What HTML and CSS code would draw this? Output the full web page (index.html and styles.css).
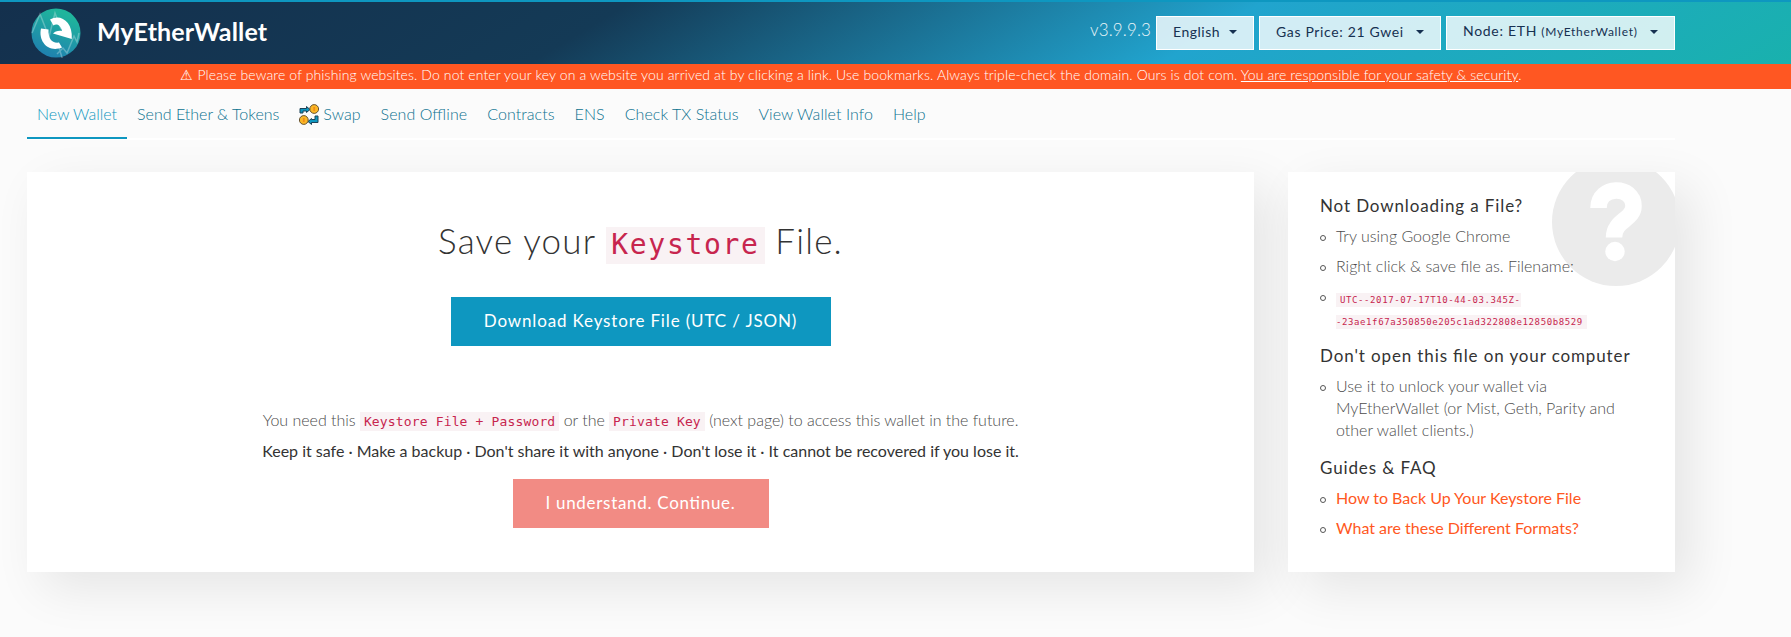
FILE: index.html
```html
<!DOCTYPE html>
<html lang="en">
<head>
<meta charset="utf-8">
<title>MyEtherWallet</title>
<link rel="stylesheet" href="styles.css">
</head>
<body>
<header class="header">
  <a class="brand">
    <svg class="brand-logo" viewBox="0 0 50 50" width="50" height="50">
      <defs>
        <linearGradient id="lg" x1="0.7" y1="0" x2="0.3" y2="1">
          <stop offset="0.1" stop-color="#1fb59c"/>
          <stop offset="1" stop-color="#1f7fb0"/>
        </linearGradient>
      </defs>
      <circle cx="25" cy="25" r="24.5" fill="url(#lg)"/>
      <path d="M1 25 9 6l9 23 6-24 6 16M26 46l6-6 4 5 7-17 3 6 2-9M27 36l5 17" fill="none" stroke="#fff" stroke-opacity=".28" stroke-width="1.5"/>
      <path d="M19 11.500C29 5.500 42 13 40.800 31L22 25.500C23.500 23.500 28 22 31 23C29.500 16.500 25 15.500 22.500 17.500Z" fill="#fff"/>
      <path d="M10 20.500C7 34 18 45 31 39.500L28 34.500C21 35.500 17 30.500 17.500 21.500Z" fill="#fff"/>
    </svg>
    <span class="brand-name">MyEtherWallet</span>
  </a>
  <div class="tools">
    <span class="version">v3.9.9.3</span>
    <a class="select select-lang">English<i class="caret"></i></a>
    <a class="select select-gas">Gas Price: 21 Gwei<i class="caret"></i></a>
    <a class="select select-node"><span>Node: ETH <small>(MyEtherWallet)</small></span><i class="caret"></i></a>
  </div>
</header>
<div class="banner"><span class="banner-text"><span class="warn">⚠</span> Please beware of phishing websites. Do not enter your key on a website you arrived at by clicking a link. Use bookmarks. Always triple-check the domain. Ours is dot com. <a>You are responsible for your safety &amp; security</a>.</span></div>
<nav class="nav">
  <a class="tab active">New Wallet</a>
  <a class="tab">Send Ether &amp; Tokens</a>
  <a class="tab"><svg class="swap" viewBox="0 0 20 21" width="20" height="21">
      <path d="M1 9V4.500H7.500V2.500L11 5.500 7.500 8.500V7H4V9ZM19 12V18.500H12.500V20.500L9 17.500 12.500 14.500V15.500H16V12Z" fill="#0e97c0" stroke="#1d4258" stroke-width="1"/>
      <circle cx="15.200" cy="5" r="4.400" fill="#fbb726" stroke="#665332"/>
      <circle cx="4.800" cy="16" r="4.400" fill="#fbb726" stroke="#665332"/>
      <path d="M15.200 3v4M4.800 14v4" stroke="#f18d16" stroke-width="1.800"/>
    </svg>Swap</a>
  <a class="tab">Send Offline</a>
  <a class="tab">Contracts</a>
  <a class="tab">ENS</a>
  <a class="tab">Check TX Status</a>
  <a class="tab">View Wallet Info</a>
  <a class="tab">Help</a>
</nav>
<main class="content">
  <section class="card save">
    <h1>Save your <code>Keystore</code> File.</h1>
    <a class="btn btn-primary">Download Keystore File (UTC / JSON)</a>
    <p class="need">You need this <code>Keystore File + Password</code> or the <code>Private Key</code> (next page) to access this wallet in the future.</p>
    <p class="keep">Keep it safe · Make a backup · Don't share it with anyone · Don't lose it · It cannot be recovered if you lose it.</p>
    <a class="btn btn-danger">I understand. Continue.</a>
  </section>
  <aside class="card help">
    <svg class="help-icon" viewBox="0 0 128 128" width="128" height="128">
      <circle cx="64" cy="64" r="64" fill="#ebebeb"/>
      <path d="M46.500 50C46.500 27 81.500 27 81.500 48C81.500 62 62 62 62 79.500" fill="none" stroke="#fff" stroke-width="16.500"/>
      <circle cx="63" cy="93.500" r="9.700" fill="#fff"/>
    </svg>
    <h2>Not Downloading a File?</h2>
    <ul>
      <li>Try using Google Chrome</li>
      <li>Right click &amp; save file as. Filename:</li>
      <li class="file"><span><code>UTC--2017-07-17T10-44-03.345Z-<br>-23ae1f67a350850e205c1ad322808e12850b8529</code></span></li>
    </ul>
    <h2>Don't open this file on your computer</h2>
    <ul>
      <li>Use it to unlock your wallet via MyEtherWallet (or Mist, Geth, Parity and other wallet clients.)</li>
    </ul>
    <h2>Guides &amp; FAQ</h2>
    <ul>
      <li><a>How to Back Up Your Keystore File</a></li>
      <li><a>What are these Different Formats?</a></li>
    </ul>
  </aside>
</main>
</body>
</html>
```
FILE: styles.css
```css
*, *::before { box-sizing: border-box; }
body {
  margin: 0;
  height: 637px;
  overflow: hidden;
  background: #fbfbfb;
  color: #333;
  font: 300 16px/22px Lato, sans-serif;
  font-feature-settings: "liga" 1;
}
h1, h2, p, ul { margin: 0; padding: 0; font-weight: inherit; }
code {
  font-family: "DejaVu Sans Mono", monospace;
  font-weight: 400;
  line-height: 1;
  color: #c7254e;
  background: #f9f2f4;
}
.header {
  display: flex;
  justify-content: space-between;
  align-items: flex-start;
  height: 64px;
  padding: 6px 116px 0 31px;
  border-top: 2px solid #0e97c0;
  background: linear-gradient(149deg, #14304d, #143a56, #21a4ce, #19b1ad);
}
.brand { display: flex; gap: 16px; }
.brand-name {
  padding-top: 8px;
  color: #fff;
  font-size: 25px;
  font-weight: 700;
  line-height: 30px;
  letter-spacing: .15px;
}
.tools { display: flex; gap: 5px; padding-top: 8px; }
.version { color: #fff; opacity: .9; font-size: 17px; line-height: 28px; letter-spacing: .15px; width: 61px; white-space: nowrap; }
.select {
  display: flex;
  align-items: center;
  justify-content: space-between;
  height: 34px;
  padding: 0 16px 3px;
  border: 1px solid #fff;
  background: rgba(255, 255, 255, .8);
  color: #163151;
  font-size: 14px;
  font-weight: 400;
  letter-spacing: .65px;
  white-space: nowrap;
}
.select small { font-size: 12px; }
.select-lang { width: 98px; letter-spacing: .5px; }
.select-gas { width: 182px; }
.select-node { width: 229px; letter-spacing: .7px; }
.caret { border: 4px solid transparent; border-top: 4px solid #163151; border-bottom: 0; }
.banner {
  height: 25px;
  padding-right: 89px;
  background: #ff5722;
  color: #fff;
  text-align: center;
  font-size: 14px;
  line-height: 22px;
  letter-spacing: .115px;
  white-space: nowrap;
}
.banner a { text-decoration: underline; }
.nav {
  display: flex;
  width: 1648px;
  height: 51px;
  margin-left: 27px;
  border-bottom: 2px solid #fff;
}
.tab {
  display: flex;
  height: 50px;
  padding: 14px 10px 0;
  color: #0b7290;
  white-space: nowrap;
}
.tab:nth-child(n+3) { letter-spacing: .06px; }
.tab.active { color: #0e97c0; border-bottom: 2px solid #0e97c0; }
.swap { margin: 1px 4px 0 0; }
.content { display: flex; gap: 34px; padding: 32px 0 0 27px; }
.card {
  height: 400px;
  background: #fff;
  box-shadow: 16px 16px 47px 0 rgba(0, 0, 0, .09);
}
.save {
  display: flex;
  flex-direction: column;
  align-items: center;
  width: 1227px;
  padding-top: 48px;
}
.save h1 { font-size: 35px; line-height: 40px; letter-spacing: 1.2px; }
.save h1 code { padding: 1px 5px 3px; font-size: 28px; letter-spacing: 1.7px; }
.btn {
  height: 49px;
  color: #fff;
  font-size: 17px;
  font-weight: 400;
  line-height: 48px;
  letter-spacing: .85px;
  text-align: center;
}
.btn-primary { width: 380px; margin-top: 37px; background: #0e97c0; }
.btn-danger { width: 256px; margin-top: 17px; letter-spacing: .7px; background: #f28b84; }
.save p code { padding: 2px 4px; font-size: 13px; letter-spacing: .15px; }
.need { margin-top: 63px; color: #4c4c4c; letter-spacing: -.02px; }
.keep { margin-top: 9px; font-weight: 400; }
.help {
  position: relative;
  width: 387px;
  padding: 24px 32px 0;
  overflow: hidden;
}
.help-icon { position: absolute; top: -14px; right: -5px; }
.help h2 {
  position: relative;
  margin: 17px 0 9px;
  font-size: 17px;
  font-weight: 400;
  line-height: 20px;
  letter-spacing: .88px;
  white-space: nowrap;
}
.help h2:first-of-type { margin-top: 0; }
.help ul { position: relative; display: grid; gap: 8px; list-style: none; }
.help li { display: grid; grid-template-columns: 16px 1fr; color: #4c4c4c; }
.help li::before {
  content: "";
  width: 6px;
  height: 6px;
  margin-top: 10px;
  border: 1.5px solid #555;
  border-radius: 50%;
}
.help li a { color: #ff5722; font-weight: 400; }
.help li code { padding: 2px 4px; font-size: 9px; letter-spacing: .6px; white-space: nowrap; }
.help .file { padding-top: 1px; margin-bottom: -1px; }
.help .file::before { margin-top: 9px; }
```
